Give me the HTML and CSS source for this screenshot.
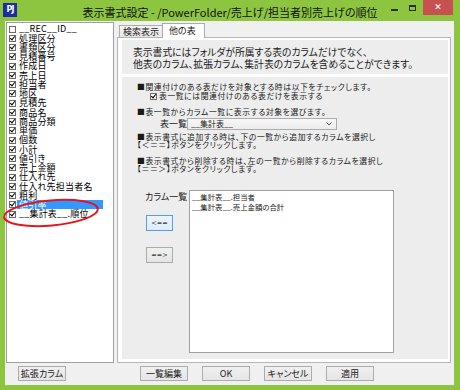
FILE: index.html
```html
<!DOCTYPE html>
<html>
    <head>
        <meta charset="utf-8">
        <link rel="stylesheet" href="styles.css">
    </head>
    <body>
        <div class="window">
            <div class="titlebar">
                <div class="app-icon">PJ</div>
                <div class="title">表示書式設定 - /PowerFolder/売上げ/担当者別売上げの順位</div>
                <div class="caption-buttons">
                    <span class="cap-btn"><span class="min-glyph"></span></span>
                    <span class="cap-btn"><span class="max-glyph"></span></span>
                    <span class="cap-close">✕</span>
                </div>
            </div>
            <div class="client">
                <!-- columns of the display format -->
                <div class="left">
                    <ul class="column-list">
                        <li><span class="check"></span><span class="label">__REC__ID__</span></li>
                        <li><span class="check on"></span><span class="label">処理区分</span></li>
                        <li><span class="check on"></span><span class="label">書類区分</span></li>
                        <li><span class="check on"></span><span class="label">見積番号</span></li>
                        <li><span class="check on"></span><span class="label">作成日</span></li>
                        <li><span class="check on"></span><span class="label">売上日</span></li>
                        <li><span class="check on"></span><span class="label">担当者</span></li>
                        <li><span class="check on"></span><span class="label">地区</span></li>
                        <li><span class="check on"></span><span class="label">見積先</span></li>
                        <li><span class="check on"></span><span class="label">商品名</span></li>
                        <li><span class="check on"></span><span class="label">商品分類</span></li>
                        <li><span class="check on"></span><span class="label">単価</span></li>
                        <li><span class="check on"></span><span class="label">個数</span></li>
                        <li><span class="check on"></span><span class="label">小計</span></li>
                        <li><span class="check on"></span><span class="label">値引き</span></li>
                        <li><span class="check on"></span><span class="label">売上金額</span></li>
                        <li><span class="check on"></span><span class="label">仕入れ先</span></li>
                        <li><span class="check on"></span><span class="label">仕入れ先担当者名</span></li>
                        <li><span class="check on"></span><span class="label">粗利</span></li>
                        <li class="selected"><span class="check on"></span><span class="label">値引率</span></li>
                        <li><span class="check on"></span><span class="label">__集計表__.順位</span></li>
                    </ul>
                    <svg class="mark" width="110" height="40" viewBox="0 0 110 40">
                        <ellipse cx="51" cy="20" rx="47" ry="12.5" transform="rotate(-5 51 20)" fill="none" stroke="#e3161e" stroke-width="2"/>
                    </svg>
                </div>

                <!-- tab control -->
                <div class="tabs">
                    <div class="tab-strip">
                        <div class="tab">検索表示</div>
                        <div class="tab active">他の表</div>
                    </div>
                    <div class="tab-panel">
                        <div class="info-box">
                            <p>表示書式にはフォルダが所属する表のカラムだけでなく、</p>
                            <p>他表のカラム、拡張カラム、集計表のカラムを含めることができます。</p>
                        </div>
                        <div class="settings-box">
                            <p class="note">■関連付けのある表だけを対象とする時は以下をチェックします。</p>
                            <div class="check-row"><span class="check on"></span>表一覧には関連付けのある表だけを表示する</div>
                            <p class="note gap">■表一覧からカラム一覧に表示する対象を選びます。</p>
                            <div class="select-row">
                                <span class="select-label">表一覧</span>
                                <div class="combo">
                                    <span>__集計表__</span>
                                    <svg width="6" height="4" viewBox="0 0 6 4"><polyline points="0.5,0.5 3,3 5.5,0.5" fill="none" stroke="#555" stroke-width="1"/></svg>
                                </div>
                            </div>
                            <div class="note-pair first">
                                <p>■表示書式に追加する時は、下の一覧から追加するカラムを選択し</p>
                                <p>【＜＝＝】ボタンをクリックします。</p>
                            </div>
                            <div class="note-pair">
                                <p>■表示書式から削除する時は、左の一覧から削除するカラムを選択し</p>
                                <p>【＝＝＞】ボタンをクリックします。</p>
                            </div>
                            <div class="column-area">
                                <div class="column-side">
                                    <div class="side-label">カラム一覧</div>
                                    <button class="small-btn focused">&lt;==</button>
                                    <button class="small-btn second">==&gt;</button>
                                </div>
                                <ul class="other-list">
                                    <li>__集計表__.担当者</li>
                                    <li>__集計表__.売上金額の合計</li>
                                </ul>
                            </div>
                        </div>
                    </div>
                </div>

                <div class="footer-left">
                    <button>拡張カラム</button>
                </div>
                <div class="footer-right">
                    <button>一覧編集</button>
                    <button>OK</button>
                    <button>キャンセル</button>
                    <button>適用</button>
                </div>
            </div>
        </div>
    </body>
</html>
```

FILE: styles.css
```css
body {
    margin: 0;
    padding: 0;
    font-family: "Noto Sans CJK JP", "Noto Sans", sans-serif;
    font-feature-settings: "palt";
    color: #000;
}
p {
    margin: 0;
}
ul {
    list-style: none;
    margin: 0;
    padding: 0;
}
.window {
    width: 460px;
    height: 390px;
    background-color: #8dc540;
    display: flex;
    flex-direction: column;
    overflow: hidden;
}
.titlebar {
    height: 21px;
    display: grid;
    grid-template-columns: 1fr auto 1fr;
    align-items: start;
}
.app-icon {
    width: 14px;
    height: 14px;
    margin: 3px 0 0 3px;
    background-color: #1d2f9e;
    color: #fff;
    font-family: "DejaVu Sans", sans-serif;
    font-weight: bold;
    font-size: 8px;
    line-height: 14px;
    text-align: center;
    letter-spacing: -1px;
}
.title {
    font-size: 11px;
    line-height: 13px;
    margin-top: 6px;
    color: #111;
    white-space: nowrap;
}
.caption-buttons {
    justify-self: end;
    display: flex;
    margin-right: 7px;
}
.cap-btn {
    width: 18px;
    height: 15px;
    display: flex;
    justify-content: center;
}
.min-glyph {
    width: 7px;
    height: 2px;
    margin-top: 9px;
    background-color: #2d2d2d;
}
.max-glyph {
    width: 5px;
    height: 3px;
    margin-top: 5px;
    border: 1px solid #2d2d2d;
    border-top-width: 2px;
}
.cap-close {
    width: 30px;
    height: 15px;
    margin-left: 2px;
    background-color: #c75050;
    color: #fff;
    font-family: "DejaVu Sans", sans-serif;
    font-weight: bold;
    font-size: 9px;
    line-height: 15px;
    text-align: center;
}
.client {
    flex: 1;
    margin: 0 6px 5px 5px;
    padding: 1px 3px 4px 1px;
    background-color: #f0f0f0;
    display: grid;
    grid-template-columns: 108px 334px;
    grid-template-rows: 341px 15px;
    column-gap: 3px;
    row-gap: 3px;
}
.left {
    position: relative;
}
.column-list {
    height: 100%;
    box-sizing: border-box;
    padding: 1.4px 0 0 2px;
    background-color: #fff;
    border: 1px solid #a0a0a0;
}
.column-list li {
    height: 9.25px;
    display: flex;
    align-items: center;
    font-size: 9px;
    letter-spacing: 0.2px;
    line-height: 9.25px;
    white-space: nowrap;
}
.check {
    position: relative;
    flex: none;
    width: 5px;
    height: 5px;
    border: 1px solid #6b6b6b;
    background-color: #fff;
    margin-right: 1px;
}
.check.on::after {
    content: "";
    position: absolute;
    left: 1px;
    top: -1px;
    width: 2px;
    height: 4px;
    border-right: 1.5px solid #000;
    border-bottom: 1.5px solid #000;
    transform: rotate(40deg);
}
.column-list .label {
    padding-left: 2px;
}
.column-list .selected .label {
    width: 84px;
    background-color: #3399ff;
    color: #fff;
}
.mark {
    position: absolute;
    left: -6px;
    top: 171px;
    overflow: visible;
}
.tabs {
    display: flex;
    flex-direction: column;
    min-height: 0;
}
.tab-strip {
    height: 15px;
    padding-left: 2px;
    display: flex;
    align-items: flex-end;
}
.tab {
    height: 11px;
    padding: 0 3px;
    border: 1px solid #acacac;
    border-bottom: none;
    background: linear-gradient(#f3f3f3, #e8e8e8);
    font-size: 9px;
    line-height: 11px;
    color: #222;
}
.tab.active {
    height: 14px;
    padding: 0 8px 0 6px;
    margin-left: -1px;
    margin-bottom: -1px;
    background: #fff;
    position: relative;
    line-height: 13px;
}
.tab-panel {
    flex: 1;
    min-height: 0;
    padding: 2px 2px 3px 4px;
    background-color: #fff;
    border: 1px solid #b5b5b5;
    display: flex;
    flex-direction: column;
    gap: 3px;
}
.info-box {
    height: 34px;
    box-sizing: border-box;
    padding: 6px 0 0 11px;
    background-color: #ededed;
    font-size: 9.8px;
    line-height: 12px;
    white-space: nowrap;
    color: #1a1a1a;
}
.settings-box {
    flex: 1;
    min-height: 0;
    padding: 6px 0 0 15px;
    background-color: #ededed;
    font-size: 7.8px;
    letter-spacing: 0.6px;
    line-height: 8px;
    white-space: nowrap;
    color: #1a1a1a;
    display: flex;
    flex-direction: column;
}
.check-row {
    display: flex;
    align-items: center;
    height: 8px;
    margin: 1px 0 0 13px;
}
.check-row .check {
    margin-right: 2px;
}
.note.gap {
    margin-top: 8px;
}
.select-row {
    display: flex;
    align-items: center;
    margin: 2px 0 0 23px;
    height: 12px;
    letter-spacing: 0;
}
.select-label {
    font-size: 9px;
    width: 27px;
}
.combo {
    width: 141px;
    height: 10px;
    padding: 0 4px 0 3px;
    border: 1px solid #acacac;
    background: linear-gradient(#f7f7f7, #ececec);
    display: flex;
    align-items: center;
    justify-content: space-between;
    font-size: 8px;
}
.note-pair {
    margin-top: 9px;
    line-height: 7.5px;
}
.note-pair.first {
    margin-top: 3px;
}
.column-area {
    flex: 1;
    min-height: 0;
    display: flex;
    gap: 2px;
    margin: 18px 0 6px 8px;
    letter-spacing: 0;
}
.column-side {
    width: 42px;
    display: flex;
    flex-direction: column;
    align-items: flex-start;
}
.side-label {
    font-size: 9px;
    line-height: 10px;
    margin-top: 2px;
}
.small-btn {
    width: 27px;
    height: 16px;
    margin: 13px 0 0 1px;
    padding: 0;
    font-family: "DejaVu Sans", sans-serif;
    font-size: 6.5px;
    color: #333;
    border: 1px solid #acacac;
    background: linear-gradient(#f0f0f0, #e5e5e5);
}
.small-btn.focused {
    border-color: #5a9ee0;
    background: linear-gradient(#ecf4fc, #dcecfc);
}
.small-btn.second {
    margin-top: 16px;
}
.other-list {
    width: 201px;
    padding: 1px 0 0 2px;
    background-color: #fff;
    border: 1px solid #a0a0a0;
    font-size: 7.4px;
    line-height: 9.5px;
}
.footer-left {
    padding-left: 12px;
    display: flex;
}
.footer-right {
    padding-left: 23px;
    display: flex;
    gap: 14px;
}
button {
    width: 48px;
    height: 15px;
    padding: 0;
    font-family: "Noto Sans CJK JP", "Noto Sans", sans-serif;
    font-feature-settings: "palt";
    font-size: 9px;
    line-height: 13px;
    color: #222;
    border: 1px solid #acacac;
    background: linear-gradient(#f0f0f0, #e5e5e5);
}
```
